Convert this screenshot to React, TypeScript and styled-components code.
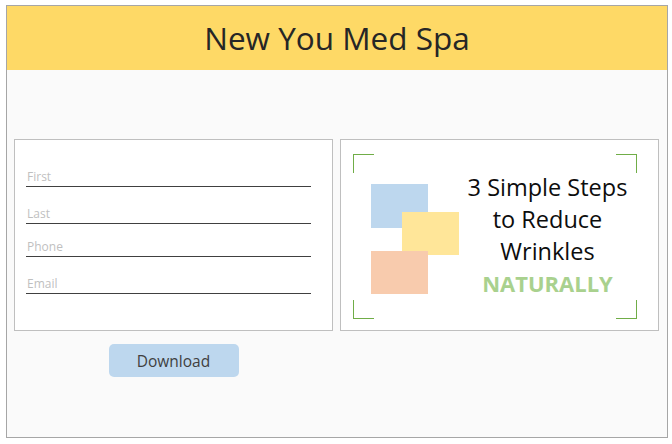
import styled, { createGlobalStyle } from "styled-components";

const GlobalStyle = createGlobalStyle`
  html, body {
    margin: 0;
    padding: 0;
    background: #ffffff;
  }
  * {
    box-sizing: border-box;
  }
`;

const Frame = styled.div`
  margin: 5px 0 0 6px;
  width: 662px;
  height: 433px;
  border: 1px solid #a6a6a6;
  background: #fafafa;
  font-family: "Open Sans", "Liberation Sans", sans-serif;
  display: flex;
  flex-direction: column;
`;

const Header = styled.header`
  height: 64px;
  background: #fed966;
  display: flex;
  align-items: center;
  justify-content: center;
`;

const Title = styled.h1`
  margin: 0;
  font-size: 31.5px;
  font-weight: 400;
  color: #262626;
  line-height: 64px;
`;

const Body = styled.main`
  padding: 69px 8px 0 7px;
  display: grid;
  grid-template-columns: 319px 319px;
  column-gap: 7px;
  row-gap: 13px;
`;

const Card = styled.section`
  height: 192px;
  background: #ffffff;
  border: 1px solid #bfbfbf;
  position: relative;
`;

const Form = styled(Card)`
  padding: 30px 0 0 11px;
  display: flex;
  flex-direction: column;
`;

const Field = styled.div<{ $gap: number }>`
  width: 285px;
  height: 17px;
  margin-top: ${(p) => p.$gap}px;
  border-bottom: 1px solid #404040;
  padding-left: 1px;
  font-size: 12px;
  line-height: 14px;
  color: #bfbfbf;
`;

const Promo = styled(Card)`
  display: flex;
  align-items: center;
  padding: 0 22px 0 30px;
`;

const Bracket = styled.span<{ $pos: "tl" | "tr" | "bl" | "br" }>`
  position: absolute;
  width: 21px;
  height: 19px;
  border-color: #70ad47;
  border-style: solid;
  border-width: 0;
  ${(p) => (p.$pos[0] === "t" ? "top: 14px; border-top-width: 1px;" : "bottom: 11px; border-bottom-width: 1px;")}
  ${(p) => (p.$pos[1] === "l" ? "left: 12px; border-left-width: 1px;" : "right: 21px; border-right-width: 1px;")}
`;

const Blocks = styled.svg`
  flex: none;
  margin-top: 7px;
`;

const Headline = styled.div`
  flex: 1;
  text-align: center;
  font-size: 23.5px;
  line-height: 32px;
  color: #0d0d0d;
`;

const Accent = styled.div`
  font-weight: 700;
  font-size: 22px;
  color: #a9d18e;
`;

const ButtonCell = styled.div`
  display: flex;
  justify-content: center;
`;

const DownloadButton = styled.button`
  width: 130px;
  height: 33px;
  border: none;
  border-radius: 5px;
  background: #bdd7ee;
  color: #404040;
  font-family: "Open Sans", "Liberation Sans", sans-serif;
  font-size: 15.5px;
  padding: 0;
  cursor: pointer;
`;

const fields = [
  { label: "First", gap: 0 },
  { label: "Last", gap: 20 },
  { label: "Phone", gap: 16 },
  { label: "Email", gap: 20 },
];

export default function App() {
  return (
    <>
      <GlobalStyle />
      <Frame>
        <Header>
          <Title>New You Med Spa</Title>
        </Header>
        <Body>
          <Form>
            {fields.map((f) => (
              <Field key={f.label} $gap={f.gap}>
                {f.label}
              </Field>
            ))}
          </Form>
          <Promo>
            <Bracket $pos="tl" />
            <Bracket $pos="tr" />
            <Bracket $pos="bl" />
            <Bracket $pos="br" />
            <Blocks width="88" height="110" viewBox="0 0 88 110">
              <rect x="0" y="0" width="57" height="44" fill="#bdd7ee" />
              <rect x="31" y="28" width="57" height="43" fill="#ffe699" />
              <rect x="0" y="67" width="57" height="43" fill="#f8cbad" />
            </Blocks>
            <Headline>
              <div>3 Simple Steps</div>
              <div>to Reduce</div>
              <div>Wrinkles</div>
              <Accent>NATURALLY</Accent>
            </Headline>
          </Promo>
          <ButtonCell>
            <DownloadButton>Download</DownloadButton>
          </ButtonCell>
        </Body>
      </Frame>
    </>
  );
}
